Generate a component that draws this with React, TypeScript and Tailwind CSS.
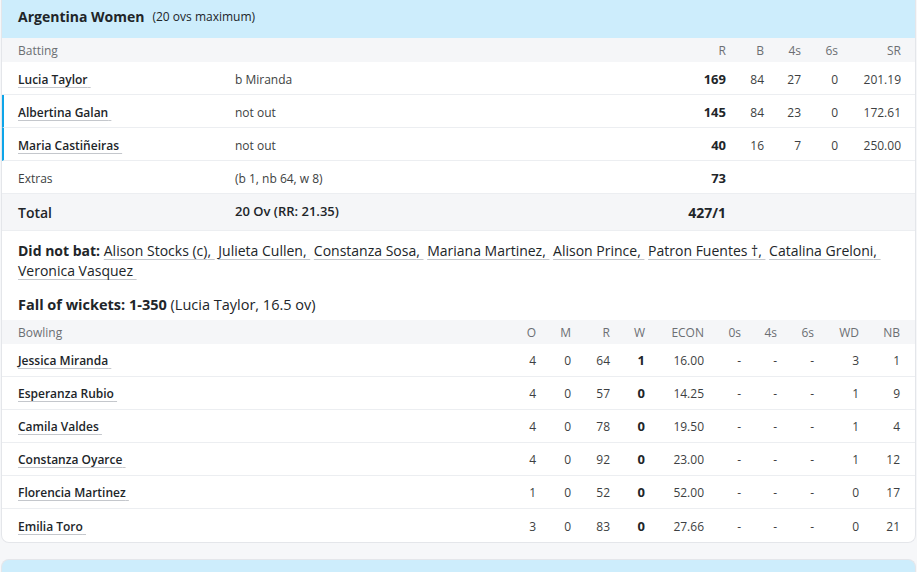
import React from "react";

const font = { fontFamily: '"Open Sans", "Noto Sans", sans-serif' };

interface Batter {
  name: string;
  dismissal: string;
  r: number;
  b: number;
  fours: number;
  sixes: number;
  sr: string;
  notOut?: boolean;
}

interface Bowler {
  name: string;
  o: number;
  m: number;
  r: number;
  w: number;
  econ: string;
  wd: number;
  nb: number;
}

const batters: Batter[] = [
  { name: "Lucia Taylor", dismissal: "b Miranda", r: 169, b: 84, fours: 27, sixes: 0, sr: "201.19" },
  { name: "Albertina Galan", dismissal: "not out", r: 145, b: 84, fours: 23, sixes: 0, sr: "172.61", notOut: true },
  { name: "Maria Castiñeiras", dismissal: "not out", r: 40, b: 16, fours: 7, sixes: 0, sr: "250.00", notOut: true },
];

const bowlers: Bowler[] = [
  { name: "Jessica Miranda", o: 4, m: 0, r: 64, w: 1, econ: "16.00", wd: 3, nb: 1 },
  { name: "Esperanza Rubio", o: 4, m: 0, r: 57, w: 0, econ: "14.25", wd: 1, nb: 9 },
  { name: "Camila Valdes", o: 4, m: 0, r: 78, w: 0, econ: "19.50", wd: 1, nb: 4 },
  { name: "Constanza Oyarce", o: 4, m: 0, r: 92, w: 0, econ: "23.00", wd: 1, nb: 12 },
  { name: "Florencia Martinez", o: 1, m: 0, r: 52, w: 0, econ: "52.00", wd: 0, nb: 17 },
  { name: "Emilia Toro", o: 3, m: 0, r: 83, w: 0, econ: "27.66", wd: 0, nb: 21 },
];

const didNotBat = [
  "Alison Stocks (c)",
  "Julieta Cullen",
  "Constanza Sosa",
  "Mariana Martinez",
  "Alison Prince",
  "Patron Fuentes †",
  "Catalina Greloni",
  "Veronica Vasquez",
];

const PlayerLink = ({ name }: { name: string }) => (
  <a className="font-semibold text-[#212529] underline decoration-[#c4c7cc] underline-offset-[3px]">
    {name}
    {"\u00a0"}
  </a>
);

const BattingHead = () => (
  <div className="flex h-[24px] items-center bg-[#f5f6f8] pl-[16px] pr-[14px] pt-[2px] text-[12px] text-[#6c6f73]">
    <div className="flex-1">Batting</div>
    <div className="w-[60px] text-right">R</div>
    <div className="w-[38px] text-right">B</div>
    <div className="w-[37px] text-right">4s</div>
    <div className="w-[37px] text-right">6s</div>
    <div className="w-[63px] text-right">SR</div>
  </div>
);

const BatterRow = ({ p }: { p: Batter }) => (
  <div
    className={`flex h-[33px] items-center border-b border-[#eceef1] pr-[14px] pt-[3px] text-[12px] text-[#3d3f42] ${
      p.notOut ? "border-l-2 border-l-[#0ea5e9] pl-[14px]" : "pl-[16px]"
    }`}
  >
    <div className="w-[217px]">
      <PlayerLink name={p.name} />
    </div>
    <div className="flex-1">{p.dismissal}</div>
    <div className="w-[60px] text-right text-[13px] font-bold text-[#212529]">{p.r}</div>
    <div className="w-[38px] text-right">{p.b}</div>
    <div className="w-[37px] text-right">{p.fours}</div>
    <div className="w-[37px] text-right">{p.sixes}</div>
    <div className="w-[63px] text-right">{p.sr}</div>
  </div>
);

const BowlCols = ({ cells, head }: { cells: (string | number)[]; head?: boolean }) => {
  const widths = ["w-[35px]", "w-[35px]", "w-[39px]", "w-[35px]", "w-[59px]", "w-[37px]", "w-[36px]", "w-[37px]", "w-[45px]", "w-[41px]"];
  return (
    <>
      {cells.map((c, i) => (
        <div
          key={i}
          className={`${widths[i]} text-right ${i === 3 && !head ? "text-[13px] font-bold text-[#212529]" : ""}`}
        >
          {c}
        </div>
      ))}
    </>
  );
};

const BowlerRow = ({ b, last }: { b: Bowler; last?: boolean }) => (
  <div
    className={`flex h-[33px] items-center pl-[16px] pr-[15px] pt-[2px] text-[12px] text-[#3d3f42] ${
      last ? "" : "border-b border-[#eceef1]"
    }`}
  >
    <div className="flex-1">
      <PlayerLink name={b.name} />
    </div>
    <BowlCols cells={[b.o, b.m, b.r, b.w, b.econ, "-", "-", "-", b.wd, b.nb]} />
  </div>
);

export default function App() {
  return (
    <div className="min-h-screen bg-[#f6f7f9] px-[1px]" style={font}>
      <div className="overflow-hidden rounded-b-lg border-x border-b border-[#e4e6ea] bg-white">
        <div className="flex h-[38px] items-center gap-[8px] bg-[#cdedfc] pb-[5px] pl-[16px]">
          <span className="text-[14px] font-bold text-[#212529]">Argentina Women</span>
          <span className="text-[12px] text-[#212529]">(20 ovs maximum)</span>
        </div>

        <BattingHead />
        {batters.map((p) => (
          <BatterRow key={p.name} p={p} />
        ))}

        <div className="flex h-[33px] items-center border-b border-[#eceef1] pl-[16px] pr-[14px] pt-[3px] text-[12px] text-[#3d3f42]">
          <div className="w-[217px]">Extras</div>
          <div className="flex-1">(b 1, nb 64, w 8)</div>
          <div className="w-[60px] text-right text-[13px] font-bold text-[#212529]">73</div>
          <div className="w-[175px]" />
        </div>

        <div className="flex h-[37px] items-center border-b border-[#eceef1] bg-[#f5f6f8] pl-[16px] pr-[14px] text-[#212529]">
          <div className="w-[217px] text-[14px] font-semibold">Total</div>
          <div className="flex-1 text-[13px] font-semibold">20 Ov (RR: 21.35)</div>
          <div className="w-[80px] text-right text-[14px] font-bold">427/1</div>
          <div className="w-[175px]" />
        </div>

        <div className="pl-[16px] pr-[14px] pt-[10px] text-[14px] leading-[20px] text-[#212529]">
          <span className="font-bold">Did not bat: </span>
          {didNotBat.map((n, i) => (
            <React.Fragment key={n}>
              <a className="whitespace-nowrap underline decoration-[#c4c7cc] underline-offset-[3px]">
                {n}
                {i < didNotBat.length - 1 ? ",\u00a0" : "\u00a0"}
              </a>{" "}
            </React.Fragment>
          ))}
        </div>

        <div className="pl-[16px] pt-[14px] pb-[5px] text-[14.5px] leading-[20px] text-[#212529]">
          <span className="font-bold">Fall of wickets: 1-350</span>{" "}
          <span>(Lucia Taylor, 16.5 ov)</span>
        </div>

        <div className="flex h-[24px] items-center bg-[#f5f6f8] pl-[16px] pr-[15px] pt-[2px] text-[12px] text-[#6c6f73]">
          <div className="flex-1">Bowling</div>
          <BowlCols head cells={["O", "M", "R", "W", "ECON", "0s", "4s", "6s", "WD", "NB"]} />
        </div>
        {bowlers.map((b, i) => (
          <BowlerRow key={b.name} b={b} last={i === bowlers.length - 1} />
        ))}
      </div>

      <div className="mt-[16px] h-[30px] rounded-t-lg border-x border-t border-[#e4e6ea] bg-[#cdedfc]" />
    </div>
  );
}
